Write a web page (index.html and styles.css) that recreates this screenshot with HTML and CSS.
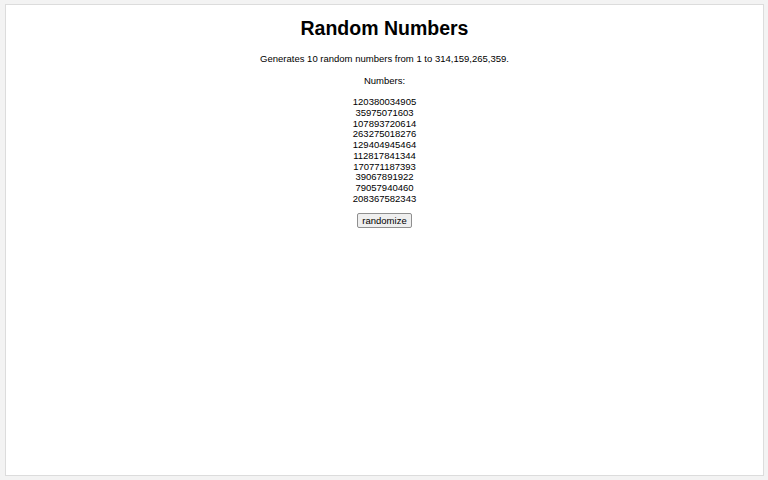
FILE: index.html
```html
<!DOCTYPE html>
<html lang="en">
<head>
  <meta charset="UTF-8">
  <title>Random Numbers</title>
  <link rel="stylesheet" href="styles.css">
</head>
<body>
  <div class="page">
    <h1>Random Numbers</h1>
    <p class="intro">Generates 10 random numbers from <span id="min">1</span> to <span id="max">314,159,265,359</span>.</p>
    <p class="label">Numbers:</p>
    <div class="numbers" id="numbers">
      <div>120380034905</div>
      <div>35975071603</div>
      <div>107893720614</div>
      <div>263275018276</div>
      <div>129404945464</div>
      <div>112817841344</div>
      <div>170771187393</div>
      <div>39067891922</div>
      <div>79057940460</div>
      <div>208367582343</div>
    </div>
    <button class="btn" id="randomize">randomize</button>
  </div>
</body>
</html>
```

FILE: styles.css
```css
html, body { margin: 0; height: 100%; }
body { font-family: "Liberation Sans", Arial, sans-serif; background: #f3f3f3; padding: 4px 4px 4px 5px; box-sizing: border-box; }
.page {
  background: #fff;
  border: 1px solid #dcdcdc;
  height: 100%;
  box-sizing: border-box;
  text-align: center;
  color: #000;
}
h1 { font-size: 19.5px; margin: 12px 0 13px; }
.intro { font-size: 9.5px; margin: 0 0 11px; }
.label { font-size: 9.5px; margin: 0 0 11px; }
.numbers { font-size: 9.5px; line-height: 10.75px; margin-bottom: 5px; }
.btn {
  font-family: "Liberation Sans", Arial, sans-serif;
  font-size: 9.5px;
  padding: 1px 4px;
  background: #efefef;
  border: 1px solid #8f8f8f;
  border-radius: 2px;
}
```
